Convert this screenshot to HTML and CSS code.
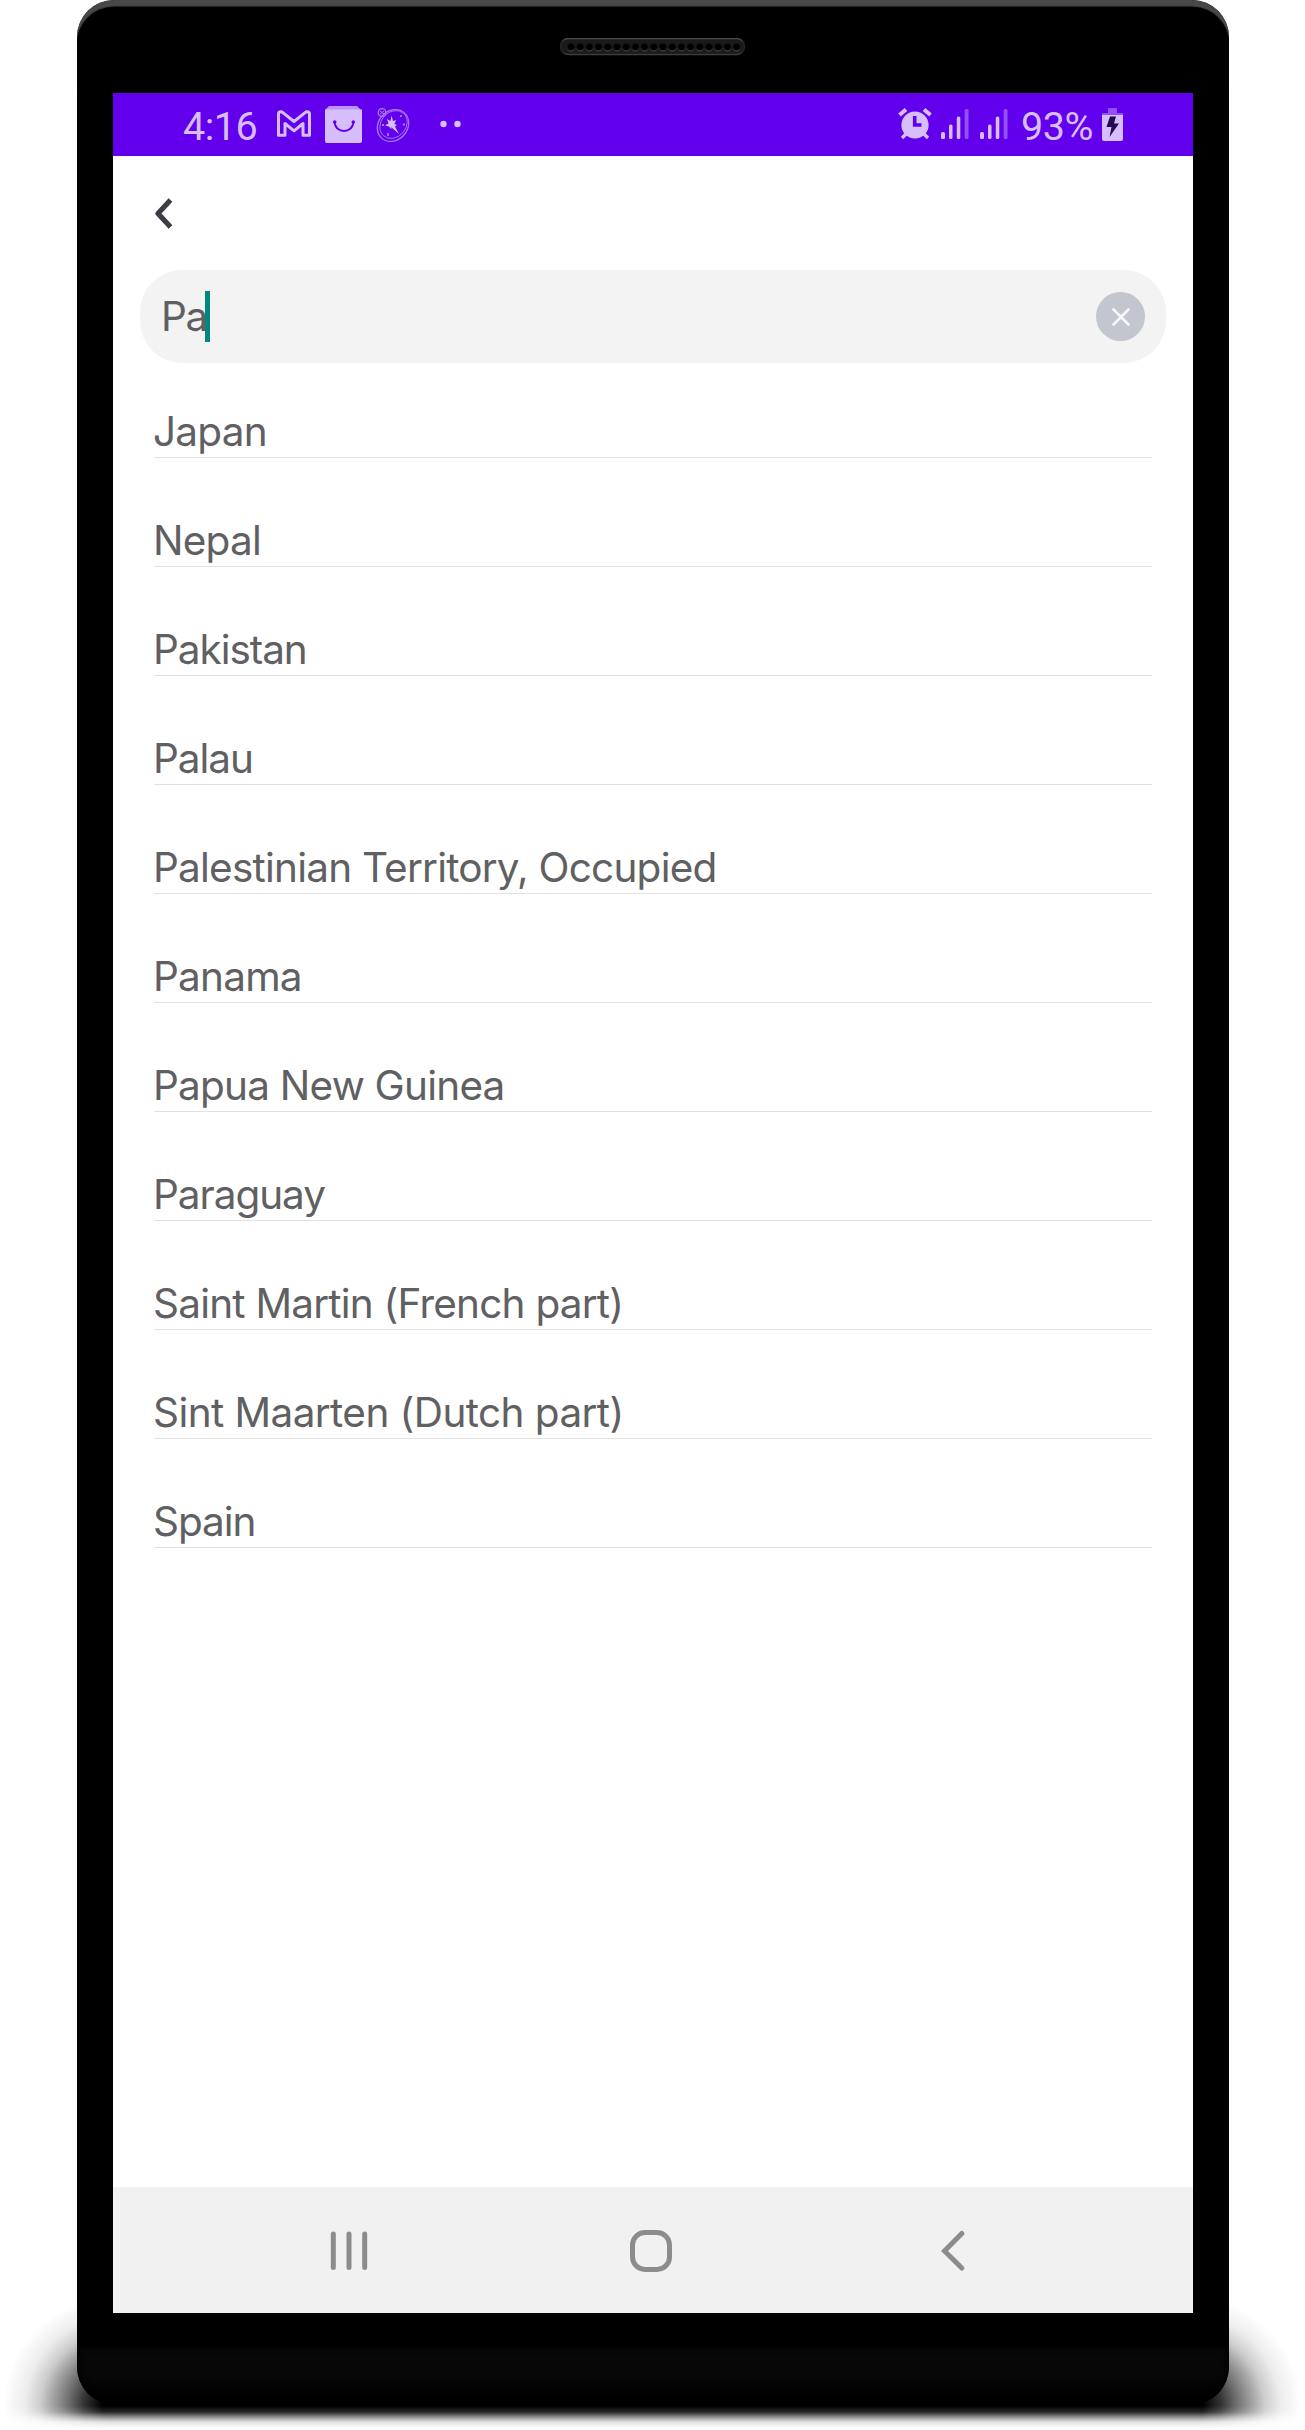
FILE: index.html
```
<!DOCTYPE html>
<html lang="en">
<head>
<meta charset="utf-8">
<title>Country search</title>
<link rel="stylesheet" href="styles.css">
</head>
<body>
<div class="stage">
  <div class="ground-shadow"></div>
  <div class="phone">
    <div class="bezel-top">
      <svg class="speaker" width="186" height="18" viewBox="0 0 186 18">
        <defs>
          <linearGradient id="rim" x1="0" y1="0" x2="0" y2="1"><stop offset="0" stop-color="#4c4c4c"/><stop offset=".25" stop-color="#262626"/><stop offset=".8" stop-color="#222"/><stop offset="1" stop-color="#3c3c3c"/></linearGradient>
          <linearGradient id="hole" x1="0" y1="0" x2="0" y2="1"><stop offset=".5" stop-color="#111"/><stop offset="1" stop-color="#555"/></linearGradient>
          <pattern id="holes" x="6.4" y="4" width="9.2" height="10" patternUnits="userSpaceOnUse"><circle cx="4.6" cy="5.2" r="3.7" fill="#000" stroke="url(#hole)" stroke-width=".9"/></pattern>
        </defs>
        <rect x=".5" y=".5" width="184" height="16" rx="8" fill="#1a1a1a" stroke="url(#rim)" stroke-width="1.4"/>
        <rect x="6.4" y="4" width="174.8" height="10" fill="url(#holes)"/>
      </svg>
    </div>
    <div class="screen">
      <div class="status">
        <span class="clock">4:16</span>
        <svg class="i-mail" width="36" height="28" viewBox="0 0 36 28" fill="none" stroke="#d6bdfb" stroke-width="3" stroke-linejoin="round"><path d="M2.500 25.200V4.500Q2.500 1.800 4.800 1.800Q6 1.800 7.200 2.800L18 11.500L28.800 2.800Q30 1.800 31.200 1.800Q33.500 1.800 33.500 4.500V25.200H27V13.500L18 20.800L9 13.500V25.200Z"/></svg>
        <svg class="i-bag" width="37" height="37" viewBox="0 0 37 37"><path d="M4 0H32L36 4H0Z" fill="#bd95f8"/><path d="M0 3.500H37V35Q37 37 35 37H2Q0 37 0 35Z" fill="#d6bdfb"/><circle cx="9.700" cy="16" r="1.800" fill="#6200ee"/><circle cx="28.300" cy="16" r="1.800" fill="#6200ee"/><path d="M9.700 16C10 28 28 28 28.300 16" fill="none" stroke="#6200ee" stroke-width="1.900"/></svg>
        <svg class="i-compass" width="36" height="36" viewBox="0 0 36 36" fill="none" stroke="#a878f7"><ellipse cx="18" cy="18.500" rx="14.500" ry="17" transform="rotate(42 18 18.500)" stroke-width="1.300"/><ellipse cx="18.500" cy="17.500" rx="12.500" ry="15" transform="rotate(42 18.500 17.500)" stroke-width=".9"/><circle cx="7" cy="5.500" r="3.800" stroke-width="1.300"/><path d="M5 4L9 7M9 4L5 7" stroke-width="1"/><path d="M24 27L16 20L16.500 22.500L14 19.500L10 18.500L13.500 16.500L12 12L15.500 14L16.500 8.500L18 14L21 13L19.500 17L22 18L20 19.500Z" fill="#d6bdfb" stroke="none"/><path d="M13 29v-3M26 8v2M30 17.500h-2M7 18h2" stroke-width="1.800"/></svg>
        <svg class="i-dots" width="21" height="8" viewBox="0 0 21 8" fill="#d6bdfb"><circle cx="3.500" cy="4" r="3.200"/><circle cx="17.500" cy="4" r="3.200"/></svg>
        <span class="spacer"></span>
        <svg class="i-alarm" width="34" height="32" viewBox="0 0 34 32"><path d="M1.500 7L8 1.500M32.500 7L26 1.500" stroke="#d6bdfb" stroke-width="4"/><path d="M8 26L4 30M26 26L30 30" stroke="#d6bdfb" stroke-width="3.400"/><circle cx="17" cy="17" r="13.600" fill="#d6bdfb"/><path d="M16.700 8V17H23.500" fill="none" stroke="#6200ee" stroke-width="3.600"/></svg>
        <svg class="i-signal" width="28" height="31" viewBox="0 0 28 31" fill="#d6bdfb"><rect y="23" width="4" height="7" rx="1.500"/><rect x="8" y="15.500" width="3.500" height="14.500" rx="1.500"/><rect x="15.800" y="7.500" width="3.500" height="22.500" rx="1.500"/><rect x="23.700" y="0" width="3.800" height="30" rx="1.500" fill="#9350f4"/></svg>
        <svg class="i-signal i-signal-2" width="28" height="31" viewBox="0 0 28 31" fill="#d6bdfb"><rect y="23" width="4" height="7" rx="1.500"/><rect x="8" y="15.500" width="3.500" height="14.500" rx="1.500"/><rect x="15.800" y="7.500" width="3.500" height="22.500" rx="1.500"/><rect x="23.700" y="0" width="3.800" height="30" rx="1.500" fill="#9350f4"/></svg>
        <span class="percent">93%</span>
        <svg class="i-battery" width="21" height="33" viewBox="0 0 21 33"><path d="M6 0H15V5H21V7H0V5H6Z" fill="#9350f4"/><path d="M0 7H21V31Q21 33 19 33H2Q0 33 0 31Z" fill="#d6bdfb"/><path d="M8 8.500H14L12 15.500H17L7.500 29L9.500 19H4.500Z" fill="#260a55"/></svg>
      </div>
      <div class="toolbar">
        <svg width="18" height="31" viewBox="0 0 18 31" fill="none" stroke="#3c3d46" stroke-width="5.200" stroke-linejoin="round"><path d="M15.500 2L3 15.500L15.500 29"/></svg>
      </div>
      <div class="search">
        <span class="query">Pa</span><span class="caret"></span>
        <svg class="clear" width="49" height="49" viewBox="0 0 49 49"><circle cx="24.500" cy="24.500" r="24.500" fill="#c3c6ce"/><path d="M17.500 17.500L32.500 32.500M32.500 17.500L17.500 32.500" stroke="#f7f7f8" stroke-width="2.600" stroke-linecap="round"/></svg>
      </div>
      <ul class="countries">
        <li>Japan</li>
        <li>Nepal</li>
        <li class="tight">Pakistan</li>
        <li class="tight">Palau</li>
        <li>Palestinian Territory, Occupied</li>
        <li>Panama</li>
        <li>Papua New Guinea</li>
        <li class="tight">Paraguay</li>
        <li>Saint Martin (French part)</li>
        <li class="loose">Sint Maarten (Dutch part)</li>
        <li class="tight">Spain</li>
      </ul>
      <div class="nav">
        <svg width="38" height="42" viewBox="0 0 38 42" stroke="#8c8c8c" stroke-width="5" stroke-linecap="round"><path d="M3.300 4V37.500M19 4V37.500M34.700 4V37.500"/></svg>
        <svg class="home" width="42" height="42" viewBox="0 0 42 42" fill="none" stroke="#8c8c8c" stroke-width="5"><rect x="2.500" y="2.500" width="37" height="37" rx="12.500"/></svg>
        <svg width="24" height="42" viewBox="0 0 24 42" fill="none" stroke="#8c8c8c" stroke-width="5" stroke-linecap="round"><path d="M20.800 3.500L3.500 21L20.800 38"/></svg>
      </div>
    </div>
    <div class="bezel-bottom"></div>
  </div>
</div>
</body>
</html>
```
FILE: styles.css
```
body {
  margin: 0;
  background: #fff;
}

.stage {
  position: relative;
  width: 1305px;
  height: 2430px;
  overflow: hidden;
}

/* Soft pool of shadow under the handset */
.ground-shadow {
  position: absolute;
  left: 0;
  right: 0;
  top: 2300px;
  height: 129px;
  background:
    radial-gradient(108px 100px at 124px 106px, #000 20%, rgba(0, 0, 0, .8) 37%, rgba(0, 0, 0, .54) 53%, rgba(0, 0, 0, .36) 66%, rgba(0, 0, 0, .2) 77%, rgba(0, 0, 0, .07) 92%, transparent 112%) 0 0 / 124px 129px no-repeat,
    linear-gradient(#000, #000) 124px 0 / 1057px 129px no-repeat,
    radial-gradient(108px 100px at 0 106px, #000 20%, rgba(0, 0, 0, .8) 37%, rgba(0, 0, 0, .54) 53%, rgba(0, 0, 0, .36) 66%, rgba(0, 0, 0, .2) 77%, rgba(0, 0, 0, .07) 92%, transparent 112%) 1181px 0 / 124px 129px no-repeat;
  mask-image: linear-gradient(#000 106px, rgba(0, 0, 0, .85) 112px, rgba(0, 0, 0, .45) 117px, rgba(0, 0, 0, .12) 122px, transparent 128px);
}

.phone {
  position: relative;
  box-sizing: border-box;
  width: 1152px;
  height: 2405px;
  margin-left: 77px;
  border-radius: 37px 37px 38px 38px;
  background: #000;
  overflow: hidden;
}

.bezel-top {
  box-sizing: border-box;
  display: flex;
  justify-content: center;
  height: 93px;
  padding: 38px 0 0;
  border-radius: 37px 37px 0 0;
  box-shadow: inset 0 7px 1px -.5px #484848;
}

.screen {
  display: flex;
  flex-direction: column;
  width: 1080px;
  height: 2220px;
  margin-left: 36px;
  background: #fff;
}

.bezel-bottom {
  height: 58px;
  margin-top: 34px;
  border-radius: 0 0 38px 38px;
  background: linear-gradient(#070707 50%, #000 90%);
  box-shadow: inset 0 0 8px #000;
}

.status {
  display: flex;
  align-items: flex-start;
  height: 63px;
  flex: none;
  background: #6200ee;
  color: #d6bdfb;
  font: 39.5px/46px Roboto, sans-serif;
  letter-spacing: -.5px;
}

.clock { width: 93px; margin: 11px 0 0 70px; }
.i-mail { margin: 17px 0 0 0; }
.i-bag { margin: 13px 0 0 13px; }
.i-compass { margin: 14px 1px 0 13px; }
.i-dots { margin: 27px 0 0 28px; }
.spacer { flex: 1; }
.i-alarm { margin: 15px 9px 0 0; }
.i-signal { margin: 16px 11px 0 0; }
.i-signal-2 { margin-right: 13px; }
.percent { width: 81px; margin-top: 11px; }
.i-battery { margin: 15px 70px 0 0; }

.toolbar {
  display: flex;
  align-items: center;
  height: 114px;
  padding-left: 42px;
  flex: none;
}

.search {
  box-sizing: border-box;
  display: flex;
  align-items: center;
  height: 93px;
  margin: 0 27px;
  padding: 0 21px;
  flex: none;
  border-radius: 42px;
  background: #f3f3f3;
}

.query, .countries {
  color: #606062;
  font: 40.5px/48px Inter, sans-serif;
  letter-spacing: -.78px;
}

.query { margin-right: -2px; padding-top: 1px; letter-spacing: -1.4px; }
.caret { width: 5px; height: 51px; background: #00897b; }
.clear { margin-left: auto; }

.countries {
  margin: 0 41px;
  padding: 0;
  list-style: none;
  flex: 1;
}

.countries li {
  box-sizing: border-box;
  display: flex;
  align-items: flex-end;
  height: 109px;
  padding-bottom: 1px;
  border-bottom: 1px solid #e2e2e2;
  text-indent: -1px;
}

.countries li:first-child { height: 95px; }
.countries .tight { letter-spacing: -1.05px; }
.countries .loose { letter-spacing: -.58px; }

.nav {
  box-sizing: border-box;
  display: flex;
  align-items: center;
  justify-content: space-between;
  height: 126px;
  padding: 2px 228px 0 217px;
  flex: none;
  background: #f1f1f1;
}

.home { margin-right: 8px; }
```
